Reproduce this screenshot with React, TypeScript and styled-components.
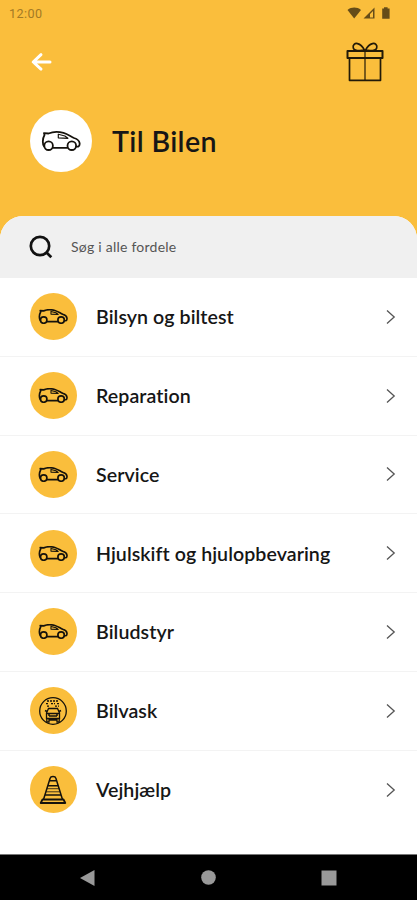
import React from 'react';
import styled, { createGlobalStyle } from 'styled-components';

const yellow = '#fabe3c';

const GlobalStyle = createGlobalStyle`
  * { box-sizing: border-box; }
  body { margin: 0; background: #fff; }
  button { border: 0; padding: 0; background: none; font: inherit; color: inherit; }
  svg { display: block; flex: none; }
`;

const Screen = styled.div`
  width: 417px;
  height: 900px;
  display: flex;
  flex-direction: column;
  overflow: hidden;
  background: ${yellow};
  font-family: Lato, 'Open Sans', sans-serif;
  font-variant-ligatures: none;
  color: #161616;
`;

const StatusBar = styled.div`
  height: 26px;
  padding: 0 25px 0 9px;
  display: flex;
  align-items: center;
  justify-content: space-between;
  font: 400 12.6px Roboto, sans-serif;
  letter-spacing: 0.45px;
  color: #a37a25;
`;

const TopBar = styled.div`
  height: 74px;
  padding: 14px 33px 0 31px;
  display: flex;
  justify-content: space-between;
`;

const BackButton = styled.button`
  width: 22px;
  height: 44px;
`;

const TitleRow = styled.div`
  height: 116px;
  padding: 10px 30px 0;
  display: flex;
  align-items: flex-start;
  gap: 20px;
`;

const Disc = styled.div<{ $size: number; $color: string }>`
  flex: none;
  width: ${p => p.$size}px;
  height: ${p => p.$size}px;
  border-radius: 50%;
  background: ${p => p.$color};
  display: flex;
  align-items: center;
  justify-content: center;
`;

const Title = styled.h1`
  margin: 0;
  font-size: 28.6px;
  line-height: 62px;
  font-weight: 600;
  letter-spacing: 0.35px;
`;

const Sheet = styled.main`
  flex: 1;
  border-radius: 23px 23px 0 0;
  overflow: hidden;
  background: #fff;
`;

const SearchBar = styled.div`
  height: 62px;
  padding-left: 29px;
  display: flex;
  align-items: center;
  gap: 18px;
  background: #f0f0f0;
  font-size: 14px;
  letter-spacing: 0.24px;
  color: #555;
`;

const Placeholder = styled.span`
  padding-bottom: 2px;
`;

const Row = styled.div`
  height: 78.75px;
  padding: 0 20px 0 29.5px;
  display: flex;
  align-items: center;
  border-bottom: 1px solid #f3f3f3;

  &:last-child { border-bottom: 0; }
`;

const Label = styled.span`
  flex: 1;
  margin-left: 19.5px;
  font-size: 19.6px;
  font-weight: 600;
  letter-spacing: 0.06px;
  white-space: nowrap;
`;

const NavBar = styled.nav`
  height: 46px;
  border-top: 1px solid #777;
  padding: 0 80px;
  display: flex;
  align-items: center;
  justify-content: space-between;
  background: #000;
`;

const CarIcon = ({ width, stroke }: { width: number; stroke: number }) => (
  <svg width={width} height={width / 2} viewBox="0 0 40 20" fill="none" stroke="#15120c" strokeWidth={stroke} strokeLinecap="round" strokeLinejoin="round">
    <circle cx="7.600" cy="14.700" r="4.300" />
    <circle cx="30.800" cy="14.700" r="4.300" />
    <path d="M12.200 16.800h14M3 15.200C1.300 13 1.500 7.500 3.500 4L3 2.200l4.500.3C12 .6 18 .7 22.500 1.900c4 1.100 7 3.500 10.500 5.100 3.200 1 5.300 2.500 5.600 5.200.2 1.600-.3 3-1.300 3.400h-2" />
    <path d="M17.300 3.200v3.600l9.600.5-3-2.300z" strokeWidth={stroke * 0.65} />
  </svg>
);

const WashIcon = () => (
  <svg width="30" height="30" viewBox="0 0 30 30" fill="none" stroke="#15120c" strokeWidth="1.300">
    <circle cx="15" cy="15" r="13.300" />
    <path d="M8.500 17l2-4.500h9l2 4.500v5.500h-13zM8.500 17.500h13M11 22.500v3.500H8.800v-4M19 22.500v3.500h2.200v-4M11 20h8M11.500 24h7" />
    <path d="M9 5h12M8 7.600h3m2 0h4m2 0h3M9 10.200h3m5 0h4" strokeDasharray="2 1" />
    <path d="M10 19h2m6 0h2M7 14.500l2 1m14-1l-2 1" strokeWidth="1.600" />
  </svg>
);

const ConeIcon = () => (
  <svg width="28" height="30" viewBox="0 0 28 30" fill="none" stroke="#15120c" strokeWidth="1.500" strokeLinejoin="round">
    <path d="M4.500 24.500L11.200 3c.5-2 5.100-2 5.600 0l6.700 21.500M10.500 5.800h7M8.800 10.700h10.400M5.900 20h16.200" />
    <path d="M8 13.700h12M7.200 16.800h13.600" strokeWidth=".8" />
    <path d="M3.500 24.500h21l1.800 3.500H1.700z" strokeWidth="1.800" />
  </svg>
);

const GiftIcon = () => (
  <svg width="38" height="42" viewBox="0 0 38 42" fill="none" stroke="#221a08" strokeWidth="1.700" strokeLinejoin="round">
    <path d="M1.500 11h35v7h-35z" strokeWidth="2" />
    <path d="M3.500 18v22.300h31V18" />
    <path d="M19 11v29" strokeWidth="1.200" />
    <path d="M18.500 10.200C13 10.900 8 10.200 7.300 7.900 6.400 4.900 9 3 11.500 3.600c3 .7 5.500 3.600 7 6.600zM19.500 10.200C25 10.900 30 10.200 30.700 7.900c.9-3-1.700-4.900-4.200-4.300-3 .7-5.500 3.600-7 6.600z" />
  </svg>
);

const StatusIcons = () => (
  <svg width="45" height="15" viewBox="0 0 45 15" fill="#654c18">
    <path d="M.5 4C4.500.8 10 .8 14 4L7.200 12.500z" />
    <path d="M27.500 1.500v11h-11zM26 5l-3 3v3.500h3z" fillRule="evenodd" />
    <path d="M37 1.200h3.600v1.200h2v10.400h-7.400V2.400H37z" />
  </svg>
);

const ITEMS: { label: string; icon: 'car' | 'wash' | 'cone' }[] = [
  { label: 'Bilsyn og biltest', icon: 'car' },
  { label: 'Reparation', icon: 'car' },
  { label: 'Service', icon: 'car' },
  { label: 'Hjulskift og hjulopbevaring', icon: 'car' },
  { label: 'Biludstyr', icon: 'car' },
  { label: 'Bilvask', icon: 'wash' },
  { label: 'Vejhjælp', icon: 'cone' },
];

export default function App() {
  return (
    <>
      <GlobalStyle />
      <Screen>
        <StatusBar>
          <span>12:00</span>
          <StatusIcons />
        </StatusBar>
        <TopBar>
          <BackButton aria-label="Tilbage">
            <svg width="22" height="44" viewBox="0 0 22 44" fill="none" stroke="#fff" strokeWidth="3" strokeLinecap="round" strokeLinejoin="round">
              <path d="M19 22H2.500M10 14.700L2.200 22l7.800 7.100" />
            </svg>
          </BackButton>
          <GiftIcon />
        </TopBar>
        <TitleRow>
          <Disc $size={62} $color="#fff">
            <CarIcon width={40} stroke={1.8} />
          </Disc>
          <Title>Til Bilen</Title>
        </TitleRow>
        <Sheet>
          <SearchBar>
            <svg width="24" height="24" viewBox="0 0 24 24" fill="none" stroke="#111" strokeWidth="2.700">
              <circle cx="11" cy="11" r="9.200" />
              <path d="M17 17l5.300 5.300" />
            </svg>
            <Placeholder>Søg i alle fordele</Placeholder>
          </SearchBar>
          {ITEMS.map(item => (
            <Row key={item.label}>
              <Disc $size={47} $color={yellow}>
                {item.icon === 'car' && <CarIcon width={30} stroke={2.2} />}
                {item.icon === 'wash' && <WashIcon />}
                {item.icon === 'cone' && <ConeIcon />}
              </Disc>
              <Label>{item.label}</Label>
              <svg width="12" height="16" viewBox="0 0 12 16" fill="none" stroke="#555" strokeWidth="1.300">
                <path d="M2 1.500L9.200 8 2 14.500" />
              </svg>
            </Row>
          ))}
        </Sheet>
        <NavBar>
          <svg width="15" height="16" viewBox="0 0 15 16" fill="#999"><path d="M0 8L14.500 0v16z" /></svg>
          <svg width="15" height="15" viewBox="0 0 15 15" fill="#999"><circle cx="7.500" cy="7.500" r="7.300" /></svg>
          <svg width="16" height="16" viewBox="0 0 16 16" fill="#999"><path d="M.5.500h15v15H.5z" /></svg>
        </NavBar>
      </Screen>
    </>
  );
}
